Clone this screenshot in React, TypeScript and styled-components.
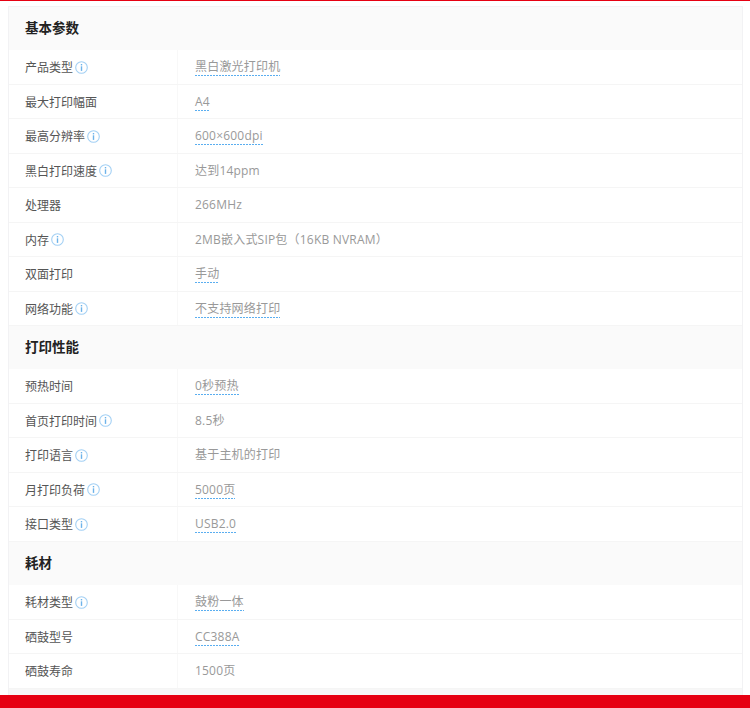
import { createGlobalStyle } from "styled-components";
import styled from "styled-components";

interface Spec {
  label: string;
  value: string;
  info?: boolean;
  link?: boolean;
}

interface Group {
  title: string;
  rows: Spec[];
}

const groups: Group[] = [
  {
    title: "基本参数",
    rows: [
      { label: "产品类型", value: "黑白激光打印机", info: true, link: true },
      { label: "最大打印幅面", value: "A4", link: true },
      { label: "最高分辨率", value: "600×600dpi", info: true, link: true },
      { label: "黑白打印速度", value: "达到14ppm", info: true },
      { label: "处理器", value: "266MHz" },
      { label: "内存", value: "2MB嵌入式SIP包（16KB NVRAM）", info: true },
      { label: "双面打印", value: "手动", link: true },
      { label: "网络功能", value: "不支持网络打印", info: true, link: true },
    ],
  },
  {
    title: "打印性能",
    rows: [
      { label: "预热时间", value: "0秒预热", link: true },
      { label: "首页打印时间", value: "8.5秒", info: true },
      { label: "打印语言", value: "基于主机的打印", info: true },
      { label: "月打印负荷", value: "5000页", info: true, link: true },
      { label: "接口类型", value: "USB2.0", info: true, link: true },
    ],
  },
  {
    title: "耗材",
    rows: [
      { label: "耗材类型", value: "鼓粉一体", info: true, link: true },
      { label: "硒鼓型号", value: "CC388A", link: true },
      { label: "硒鼓寿命", value: "1500页" },
    ],
  },
];

const InfoIcon = () => (
  <IconBox viewBox="0 0 13 13" aria-hidden="true">
    <circle cx="6.5" cy="6.5" r="5.8" fill="none" stroke="#a3d0f4" strokeWidth="1.1" />
    <rect x="5.8" y="3" width="1.4" height="1.4" fill="#6db3ea" />
    <rect x="5.8" y="5.3" width="1.4" height="4.6" fill="#6db3ea" />
  </IconBox>
);

const App = () => (
  <Page>
    <GlobalStyle />
    <TopBar />
    <Table>
      {groups.map((group) => (
        <section key={group.title}>
          <GroupTitle>{group.title}</GroupTitle>
          {group.rows.map((row) => (
            <Row key={row.label}>
              <Label>
                {row.label}
                {row.info && <InfoIcon />}
              </Label>
              <Value>
                <ValueText $link={row.link}>{row.value}</ValueText>
              </Value>
            </Row>
          ))}
        </section>
      ))}
    </Table>
    <BottomBar />
  </Page>
);

const GlobalStyle = createGlobalStyle`
  html, body {
    margin: 0;
    padding: 0;
    background: #fff;
  }
`;

const Page = styled.div`
  width: 750px;
  height: 708px;
  display: flex;
  flex-direction: column;
  overflow: hidden;
  font-family: "Open Sans", "Noto Sans CJK SC", sans-serif;
  font-size: 12px;
`;

const TopBar = styled.div`
  height: 1px;
  margin-bottom: 5px;
  flex-shrink: 0;
  background: #e60012;
`;

const Table = styled.div`
  flex: 1;
  margin: 0 7px 0 8px;
  background: #f7f7f7;
  border: solid #f2f2f4;
  border-width: 1px 1px 0 1px;
`;

const GroupTitle = styled.h3`
  margin: 0;
  height: 43px;
  padding: 0 0 3px 16px;
  box-sizing: border-box;
  display: flex;
  align-items: center;
  background: #fafafa;
  color: #222;
  font-size: 13.5px;
  font-weight: 700;
`;

const Row = styled.div`
  height: 34px;
  box-sizing: border-box;
  display: flex;
  background: #fff;
  border-bottom: 1px solid #f5f5f5;

  &:nth-child(even) {
    height: 35px;
  }
`;

const Label = styled.div`
  width: 169px;
  padding-left: 16px;
  box-sizing: border-box;
  display: flex;
  align-items: center;
  color: #555;
  border-right: 1px solid #f8f8f8;
`;

const IconBox = styled.svg`
  width: 13px;
  height: 13px;
  margin-left: 2px;
`;

const Value = styled.div`
  flex: 1;
  padding: 8px 0 0 17px;
  display: flex;
  align-items: flex-start;
`;

const ValueText = styled.span<{ $link?: boolean }>`
  color: #999;
  line-height: 17px;
  padding-bottom: 1px;
  letter-spacing: 0.2px;
  background: ${({ $link }) =>
    $link
      ? "repeating-linear-gradient(90deg, #5aaef0 0 2px, transparent 2px 3px) left bottom / 100% 1px no-repeat"
      : "none"};
`;

const BottomBar = styled.div`
  height: 13px;
  flex-shrink: 0;
  background: #e60012;
`;

export default App;
